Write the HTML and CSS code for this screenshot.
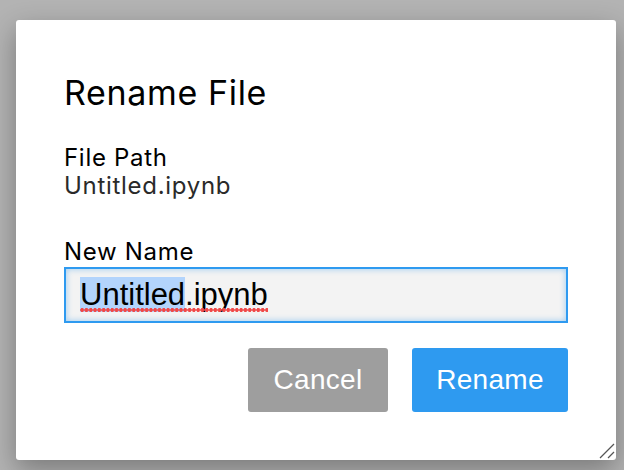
FILE: index.html
```html
<!DOCTYPE html>
<html lang="en">
<head>
<meta charset="utf-8">
<title>Rename File</title>
<link rel="stylesheet" href="styles.css">
</head>
<body>
<div class="dialog">
  <h1 class="title">Rename File</h1>
  <div class="field">
    <div class="label">File Path</div>
    <div class="value">Untitled.ipynb</div>
  </div>
  <div class="field field-name">
    <div class="label">New Name</div>
    <div class="input"><span class="misspelt"><span class="sel">Untitled</span>.ipynb</span></div>
  </div>
  <div class="actions">
    <button class="btn btn-cancel">Cancel</button>
    <button class="btn btn-primary">Rename</button>
  </div>
  <svg class="grip" width="16" height="16" viewBox="0 0 16 16">
    <line x1="1" y1="15" x2="15" y2="1" />
    <line x1="9" y1="15" x2="15" y2="9" />
  </svg>
</div>
</body>
</html>
```

FILE: styles.css
```css
html, body {
  margin: 0;
  padding: 0;
}
body {
  width: 624px;
  height: 470px;
  background: #b3b3b3;
  overflow: hidden;
  padding: 20px 0 0 16px;
  box-sizing: border-box;
}
.dialog {
  position: relative;
  width: 600px;
  height: 440px;
  box-sizing: border-box;
  padding: 53px 48px 48px 48px;
  background: #fff;
  border-radius: 3px;
  box-shadow: 0 10px 28px rgba(0, 0, 0, 0.32);
  display: flex;
  flex-direction: column;
}
.title {
  margin: 0;
  font-family: Inter, "Liberation Sans", sans-serif;
  font-weight: 400;
  font-size: 34px;
  letter-spacing: 0.65px;
  line-height: 40px;
  color: #000;
}
.field {
  display: flex;
  flex-direction: column;
  margin-top: 31px;
}
.field-name {
  margin-top: 38px;
}
.label, .value {
  font-family: Inter, "Liberation Sans", sans-serif;
  font-size: 24px;
  letter-spacing: 0.7px;
  line-height: 28px;
  color: #000;
}
.value {
  color: #2a2a2a;
}
.input {
  margin-top: 1px;
  height: 56px;
  box-sizing: border-box;
  border: 2px solid #2e9af0;
  background: #f3f3f3;
  box-shadow: inset 0 0 6px rgba(46, 154, 240, 0.45);
  padding: 8px 14px;
  font-family: "Liberation Sans", Arial, sans-serif;
  font-size: 31px;
  line-height: 36px;
  color: #000;
  white-space: nowrap;
}
.misspelt {
  position: relative;
}
.misspelt::after {
  content: "";
  position: absolute;
  left: 0;
  right: 0;
  bottom: 0.5px;
  height: 4px;
  background-image: radial-gradient(circle, #f04848 1.7px, transparent 2.1px);
  background-size: 4.3px 4px;
  background-repeat: repeat-x;
}
.sel {
  background: #b3d4fc;
}
.actions {
  margin-top: 25px;
  display: flex;
  justify-content: flex-end;
  gap: 24px;
}
.btn {
  height: 64px;
  border: 0;
  border-radius: 3px;
  padding: 0 24px;
  font-family: "Liberation Sans", Arial, sans-serif;
  font-size: 28px;
  letter-spacing: 0.3px;
  line-height: 62px;
  color: #fff;
}
.btn-cancel {
  background: #9e9e9e;
  min-width: 140px;
}
.btn-primary {
  background: #2e9af0;
  min-width: 156px;
}
.grip {
  position: absolute;
  right: 1px;
  bottom: 1px;
  stroke: #555;
  stroke-width: 1.3;
}
```
